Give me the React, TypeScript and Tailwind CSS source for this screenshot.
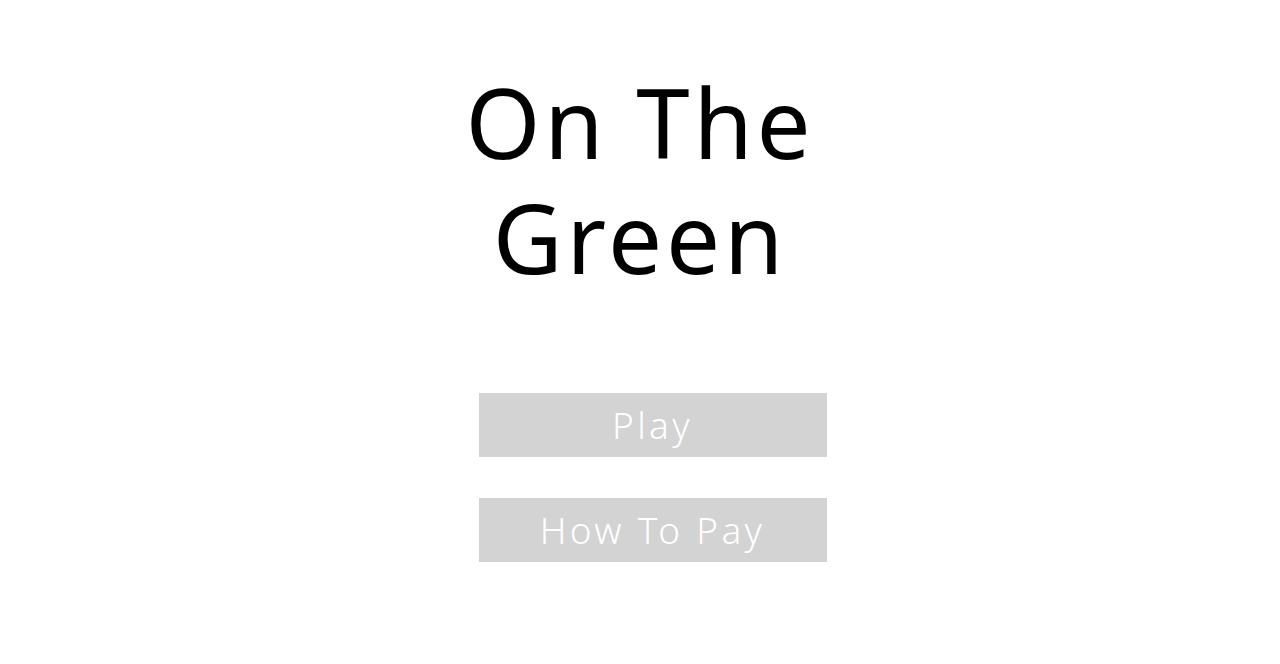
export default function App() {
  return (
    <div
      className="flex min-h-screen w-full flex-col items-center bg-white pt-[64px]"
      style={{ fontFamily: '"Noto Sans", sans-serif' }}
    >
      <h1 className="text-center text-[96px] font-normal leading-[115px] tracking-[0.04em] text-black">
        On The
        <br />
        Green
      </h1>

      <div className="mt-[99px] ml-[25px] flex flex-col gap-[41px]">
        <button className="h-[64px] w-[348px] bg-[#d3d3d3] text-[37px] font-light tracking-[0.09em] text-white">
          Play
        </button>
        <button className="h-[64px] w-[348px] bg-[#d3d3d3] text-[37px] font-light tracking-[0.09em] text-white">
          How To Pay
        </button>
      </div>
    </div>
  );
}
